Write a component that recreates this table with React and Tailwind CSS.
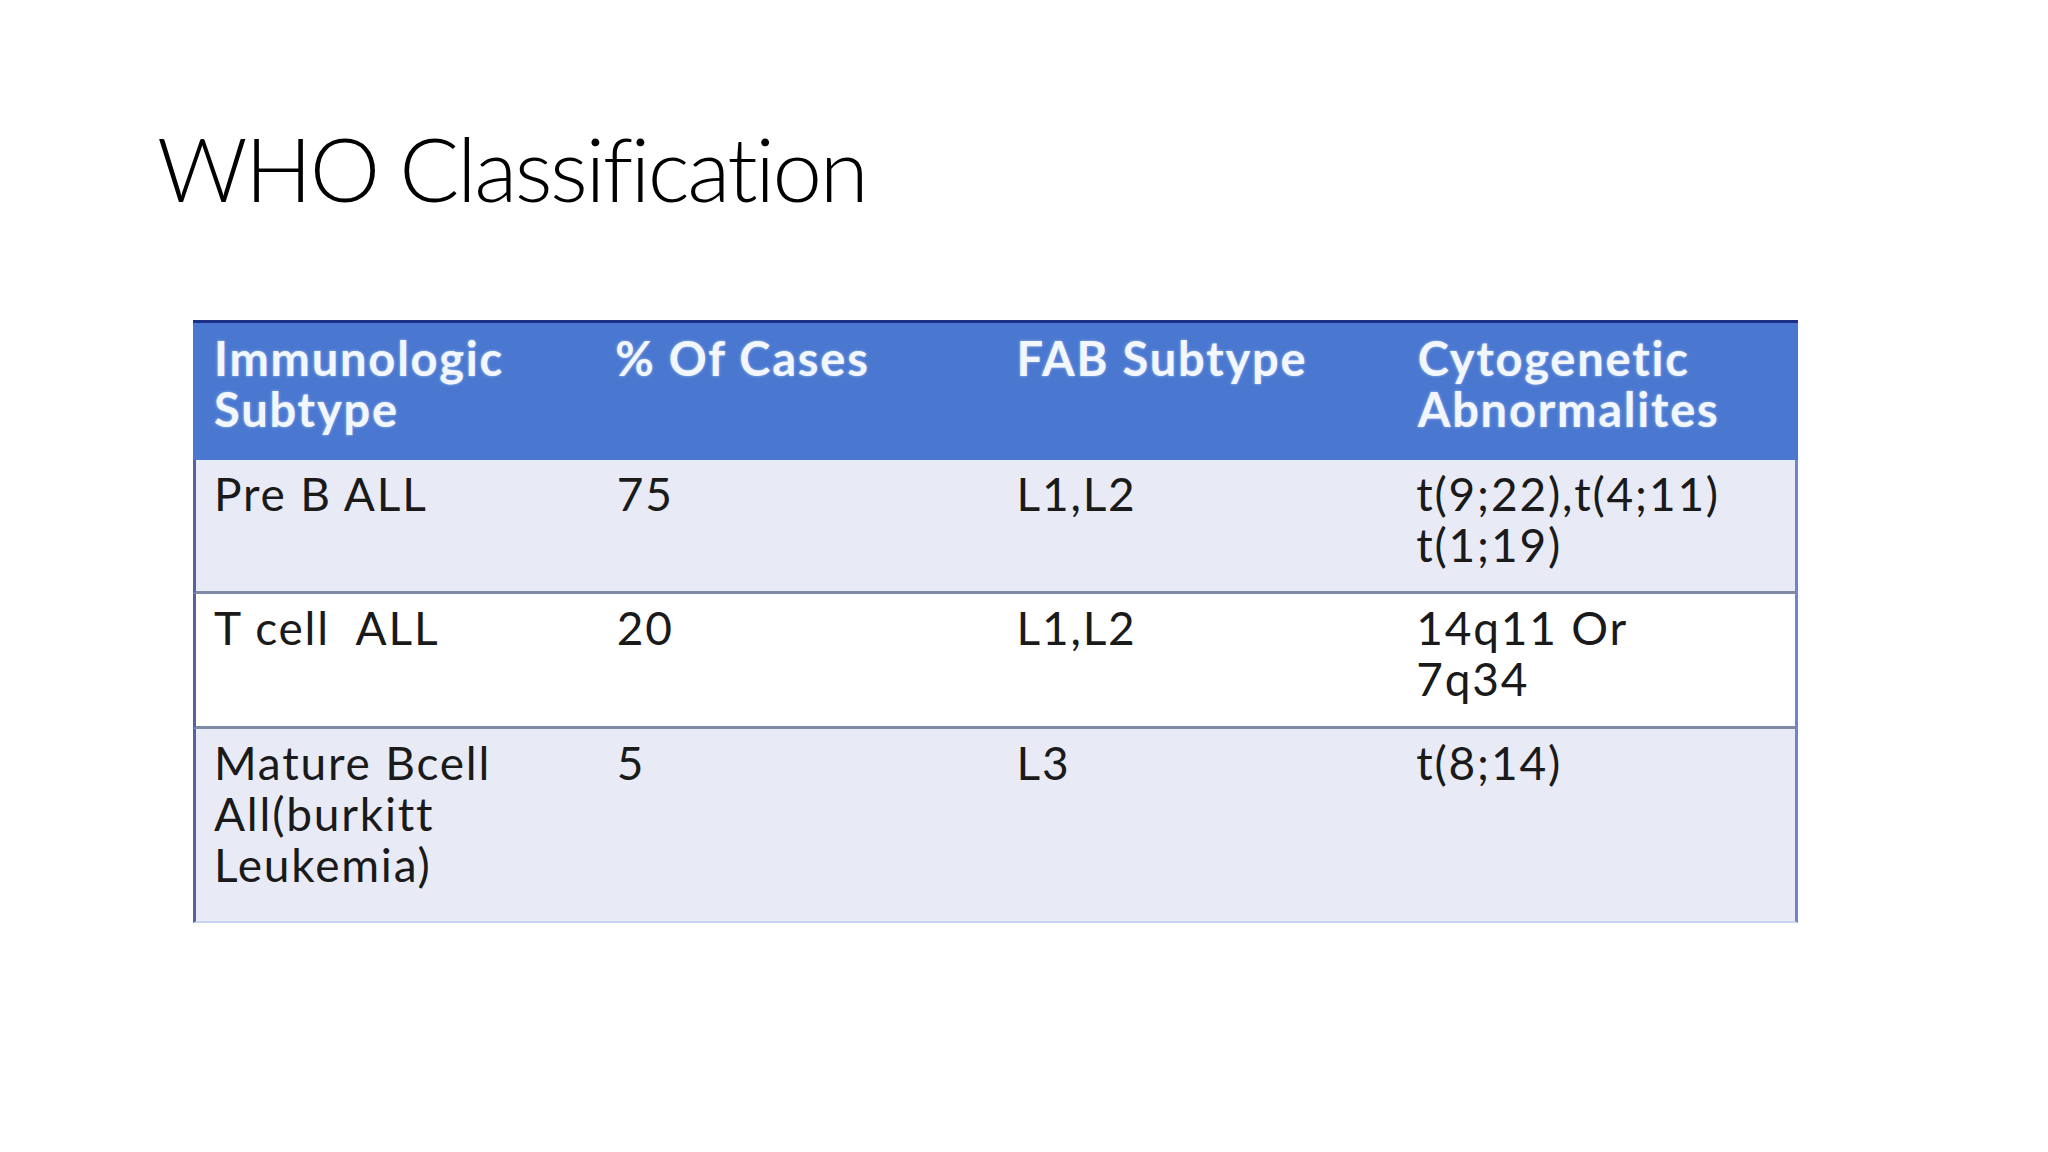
import React from "react";

const HEAD = [["Immunologic", "Subtype"], ["% Of Cases"], ["FAB Subtype"], ["Cytogenetic", "Abnormalites"]];

const ROWS = [
  { cells: [["Pre B ALL"], ["75"], ["L1,L2"], ["t(9;22),t(4;11)", "t(1;19)"]], bg: "bg-[#e8ebf6]", h: "h-[134px]" },
  { cells: [["T cell\u00a0 ALL"], ["20"], ["L1,L2"], ["14q11 Or", "7q34"]], bg: "bg-white", h: "h-[135px]" },
  { cells: [["Mature Bcell", "All(burkitt", "Leukemia)"], ["5"], ["L3"], ["t(8;14)"]], bg: "bg-[#e8ebf6]", h: "h-[194px]" },
];

export default function App() {
  return (
    <div className="w-[2048px] h-[1152px] bg-white overflow-hidden" style={{ fontFamily: "Lato, 'Open Sans', sans-serif" }}>
      {/* slide title */}
      <div className="pl-[157px] pt-[114px]">
        <h1 className="text-[89px] leading-[108px] font-light text-black tracking-[-2.5px]">WHO Classification</h1>
      </div>

      {/* table */}
      <div className="ml-[193px] mt-[98px] w-[1605px]">
        <div className="grid grid-cols-4 h-[140px] bg-[#4a78d0] border-t-[3px] border-[#1d3184] pt-[10px]">
          {HEAD.map((lines, i) => (
            <div key={i} className="pl-[21px] pr-2 text-[47px] leading-[51px] font-bold text-[#f2f7ff] tracking-[1.8px] whitespace-nowrap [text-shadow:0_0_3px_rgba(220,235,255,0.6)]">
              {lines.map((w) => <div key={w}>{w}</div>)}
            </div>
          ))}
        </div>
        {ROWS.map((r, ri) => (
          <div
            key={ri}
            className={`grid grid-cols-4 ${r.h} ${r.bg} border-l-[3px] border-l-[#55639c] border-r-[3px] border-r-[#6d88c8] pt-[8px] ${ri < 2 ? "border-b-[3px] border-b-[#7e8aa6]" : "border-b-2 border-b-[#c6d3f3]"}`}
          >
            {r.cells.map((lines, ci) => (
              <div key={ci} className={`${ci === 0 ? "pl-[18px]" : "pl-[21px]"} pr-2 text-[46px] leading-[51px] text-[#1a1a1a] tracking-[1.8px] whitespace-nowrap`}>
                {lines.map((l) => <div key={l}>{l}</div>)}
              </div>
            ))}
          </div>
        ))}
      </div>
    </div>
  );
}
